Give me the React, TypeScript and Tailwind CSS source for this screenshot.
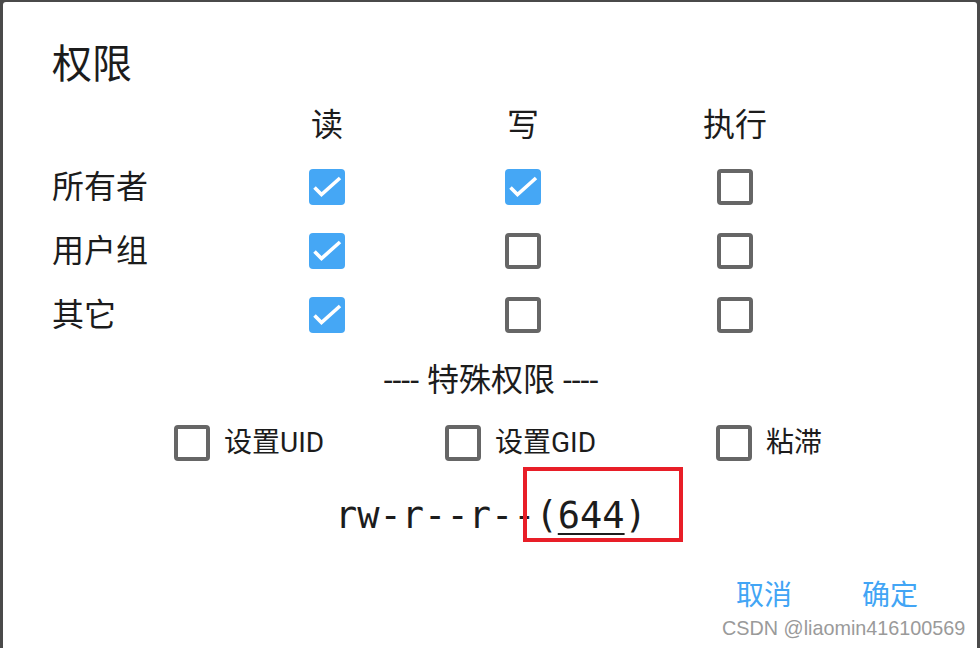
import React from "react";

const FONT = "font-['Roboto','Noto_Sans_CJK_SC',sans-serif]";

function Box({ checked }: { checked: boolean }) {
  if (checked) {
    return (
      <div className="w-[36px] h-[36px] rounded-[4px] bg-[#45a7f5] flex items-center justify-center shrink-0">
        <svg width="36" height="36" viewBox="0 0 36 36" fill="none">
          <path d="M5.5 18.5 L12.5 25.5 L31 9" stroke="white" strokeWidth="3.6" strokeLinecap="butt" strokeLinejoin="miter" />
        </svg>
      </div>
    );
  }
  return <div className="w-[36px] h-[36px] rounded-[4px] border-[4px] border-[#666666] bg-white shrink-0" />;
}

const rows: { label: string; v: boolean[] }[] = [
  { label: "所有者", v: [true, true, false] },
  { label: "用户组", v: [true, false, false] },
  { label: "其它", v: [true, false, false] },
];

function Row({ label, cells, h }: { label: React.ReactNode; cells: React.ReactNode[]; h: string }) {
  return (
    <div className={`flex items-center ${h}`}>
      <div className="w-[274px] shrink-0 pl-[49px] text-[32px] leading-none text-[#1c1c1c]">{label}</div>
      <div className="w-[100px] shrink-0 flex justify-center">{cells[0]}</div>
      <div className="w-[96px] shrink-0" />
      <div className="w-[100px] shrink-0 flex justify-center">{cells[1]}</div>
      <div className="w-[112px] shrink-0" />
      <div className="w-[100px] shrink-0 flex justify-center">{cells[2]}</div>
    </div>
  );
}

export default function App() {
  return (
    <div className={`w-[980px] h-[648px] bg-[#4a4a4a] pt-[2px] px-[3px] overflow-hidden ${FONT}`}>
      <div className="relative bg-white h-[660px] rounded-t-[3px]">
        <div className="h-[43px]" />
        <div className="h-[40px] pl-[49px] flex items-center text-[40px] leading-none text-[#1c1c1c]">权限</div>
        <div className="h-[10px]" />
        <Row
          h="h-[60px]"
          label=""
          cells={[
            <span key="a" className="text-[32px] leading-none text-[#1c1c1c]">读</span>,
            <span key="b" className="text-[32px] leading-none text-[#1c1c1c]">写</span>,
            <span key="c" className="text-[32px] leading-none text-[#1c1c1c]">执行</span>,
          ]}
        />
        {rows.map((r) => (
          <Row key={r.label} h="h-[64px]" label={r.label} cells={r.v.map((c, i) => <Box key={i} checked={c} />)} />
        ))}
        <div className="h-[66px] flex items-center justify-center text-[32px] leading-none text-[#1c1c1c]">
          <span className="ml-[2px]">---- 特殊权限 ----</span>
        </div>
        <div className="h-[60px] flex items-center pl-[171px]">
          {["设置UID", "设置GID", "粘滞"].map((t) => (
            <div key={t} className="w-[271px] shrink-0 flex items-center gap-[14px]">
              <Box checked={false} />
              <span className="text-[28px] leading-none text-[#1c1c1c]">{t}</span>
            </div>
          ))}
        </div>
        <div className="h-[84px] flex items-center pl-[332px]">
          <span className="font-['DejaVu_Sans_Mono',monospace] text-[37px] leading-none text-[#1c1c1c]">
            rw-r--r--(<span className="underline decoration-[2px] underline-offset-[5px]">644</span>)
          </span>
        </div>
        <div className="h-[78px] flex items-center">
          <span className="ml-[733px] text-[28px] leading-none text-[#42a5f5]">取消</span>
          <span className="ml-[70px] text-[28px] leading-none text-[#42a5f5]">确定</span>
        </div>
        <div className="absolute left-[520px] top-[465px] w-[160px] h-[75px] border-[4px] border-[#e81e28]" />
        <div className="absolute left-[719px] top-[617px] font-['Liberation_Sans',sans-serif] text-[19.8px] leading-none text-[#9a9a9a] [text-shadow:0_0_1px_#ffffff]">
          CSDN @liaomin416100569
        </div>
      </div>
    </div>
  );
}
